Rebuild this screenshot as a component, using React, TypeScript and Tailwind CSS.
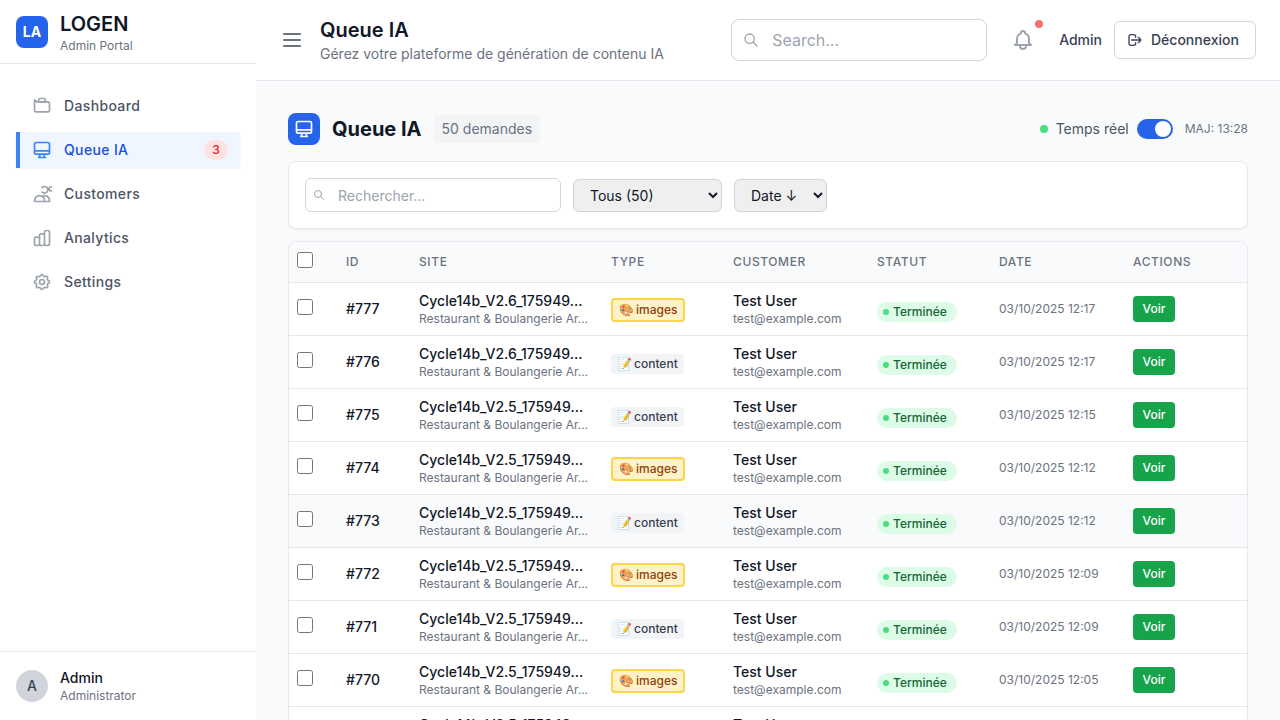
import React from "react";

type IconProps = { className?: string; paths: string[]; width?: number };

function Icon({ className, paths, width = 2 }: IconProps) {
  return (
    <svg className={className} fill="none" viewBox="0 0 24 24" stroke="currentColor" strokeWidth={width} strokeLinecap="round" strokeLinejoin="round" aria-hidden="true">
      {paths.map((d) => (
        <path key={d} d={d} />
      ))}
    </svg>
  );
}

const monitor = ["M9.75 17L9 20l-1 1h8l-1-1-.75-3M3 13h18M5 17h14a2 2 0 002-2V5a2 2 0 00-2-2H5a2 2 0 00-2 2v10a2 2 0 002 2z"];
const magnifier = ["M21 21l-6-6m2-5a7 7 0 11-14 0 7 7 0 0114 0z"];
const bell = ["M15 17h5l-1.405-1.405A2.032 2.032 0 0118 14.158V11a6.002 6.002 0 00-4-5.659V5a2 2 0 10-4 0v.341C7.67 6.165 6 8.388 6 11v3.159c0 .538-.214 1.055-.595 1.436L4 17h5m6 0v1a3 3 0 11-6 0v-1m6 0H9"];
const logout = ["M17 16l4-4m0 0l-4-4m4 4H7m6 4v1a3 3 0 01-3 3H6a3 3 0 01-3-3V7a3 3 0 013-3h4a3 3 0 013 3v1"];

const nav = [
  { label: "Dashboard", paths: ["M3 7v10a2 2 0 002 2h14a2 2 0 002-2V9a2 2 0 00-2-2H5a2 2 0 00-2-2z", "M8 5a2 2 0 012-2h4a2 2 0 012 2v2H8V5z"] },
  { label: "Queue IA", paths: monitor, active: true, badge: 3 },
  { label: "Customers", paths: ["M12 4.354a4 4 0 110 5.292M15 21H3v-1a6 6 0 0112 0v1zm0 0h6v-1a6 6 0 00-9-5.197m13.5-9a2.5 2.5 0 11-5 0 2.5 2.5 0 015 0z"] },
  { label: "Analytics", paths: ["M9 19v-6a2 2 0 00-2-2H5a2 2 0 00-2 2v6a2 2 0 002 2h2a2 2 0 002-2zm0 0V9a2 2 0 012-2h2a2 2 0 012 2v10m-6 0a2 2 0 002 2h2a2 2 0 002-2m0 0V5a2 2 0 012-2h2a2 2 0 012 2v14a2 2 0 01-2 2h-2a2 2 0 01-2-2z"] },
  { label: "Settings", paths: ["M10.325 4.317c.426-1.756 2.924-1.756 3.35 0a1.724 1.724 0 002.573 1.066c1.543-.94 3.31.826 2.37 2.37a1.724 1.724 0 001.065 2.572c1.756.426 1.756 2.924 0 3.35a1.724 1.724 0 00-1.066 2.573c.94 1.543-.826 3.31-2.37 2.37a1.724 1.724 0 00-2.572 1.065c-.426 1.756-2.924 1.756-3.35 0a1.724 1.724 0 00-2.573-1.066c-1.543.94-3.31-.826-2.37-2.37a1.724 1.724 0 00-1.065-2.572c-1.756-.426-1.756-2.924 0-3.35a1.724 1.724 0 001.066-2.573c-.94-1.543.826-3.31 2.37-2.37.996.608 2.296.07 2.572-1.065z", "M15 12a3 3 0 11-6 0 3 3 0 016 0z"] },
];

type Row = { id: number; site: string; type: "images" | "content"; date: string };

const rows: Row[] = [
  { id: 777, site: "Cycle14b_V2.6_175949...", type: "images", date: "03/10/2025 12:17" },
  { id: 776, site: "Cycle14b_V2.6_175949...", type: "content", date: "03/10/2025 12:17" },
  { id: 775, site: "Cycle14b_V2.5_175949...", type: "content", date: "03/10/2025 12:15" },
  { id: 774, site: "Cycle14b_V2.5_175949...", type: "images", date: "03/10/2025 12:12" },
  { id: 773, site: "Cycle14b_V2.5_175949...", type: "content", date: "03/10/2025 12:12" },
  { id: 772, site: "Cycle14b_V2.5_175949...", type: "images", date: "03/10/2025 12:09" },
  { id: 771, site: "Cycle14b_V2.5_175949...", type: "content", date: "03/10/2025 12:09" },
  { id: 770, site: "Cycle14b_V2.5_175949...", type: "images", date: "03/10/2025 12:05" },
  { id: 769, site: "Cycle14b_V2.5_175949...", type: "content", date: "03/10/2025 12:05" },
];

function Sidebar() {
  return (
    <aside className="flex w-64 shrink-0 flex-col bg-white">
      <div className="flex h-16 items-center gap-3 border-b border-[#e5e7eb] px-4">
        <div className="flex size-8 items-center justify-center rounded-lg bg-[#2563eb] text-sm font-bold text-white">LA</div>
        <div>
          <div className="text-xl leading-7 font-semibold text-[#111827]">LOGEN</div>
          <div className="text-xs text-[#6b7280]">Admin Portal</div>
        </div>
      </div>
      <nav className="flex flex-1 flex-col gap-2 px-4 py-6">
        {nav.map((item) => (
          <a
            key={item.label}
            href="#"
            aria-current={item.active ? "page" : undefined}
            className={
              item.active
                ? "flex h-9 items-center gap-3 border-l-4 border-[#3b82f6] bg-[#eff6ff] px-3 text-sm font-medium tracking-wide text-[#1d4ed8] shadow-xs"
                : "flex h-9 items-center gap-3 border-l-4 border-transparent px-3 text-sm font-medium tracking-wide text-[#4b5563]"
            }
          >
            <Icon className={item.active ? "size-5 text-[#3b82f6]" : "size-5 text-[#9ca3af]"} paths={item.paths} />
            <span className="flex-1">{item.label}</span>
            {item.badge && <span className="rounded-full bg-[#fee2e2] px-2 py-0.5 text-xs text-[#dc2626]">{item.badge}</span>}
          </a>
        ))}
      </nav>
      <div className="flex items-center gap-3 border-t border-[#e5e7eb] p-4">
        <div className="flex size-8 items-center justify-center rounded-full bg-[#d1d5db] text-sm font-medium text-[#374151]">A</div>
        <div>
          <div className="text-sm font-medium text-[#111827]">Admin</div>
          <div className="text-xs text-[#6b7280]">Administrator</div>
        </div>
      </div>
    </aside>
  );
}

function Header() {
  return (
    <header className="flex items-center justify-between border-b border-[#e5e7eb] bg-white px-6 py-4">
      <div className="flex items-center gap-4">
        <button type="button" aria-label="Menu" className="text-[#6b7280]">
          <Icon className="size-6" paths={["M4 6h16M4 12h16M4 18h16"]} />
        </button>
        <div>
          <h1 className="text-xl leading-7 font-semibold text-[#111827]">Queue IA</h1>
          <p className="text-sm text-[#6b7280]">Gérez votre plateforme de génération de contenu IA</p>
        </div>
      </div>
      <div className="flex items-center">
        <label className="relative mr-6 block">
          <Icon className="absolute top-[13px] left-3 size-4 text-[#9ca3af]" paths={magnifier} />
          <input type="text" aria-label="Search" placeholder="Search..." className="block h-[42px] w-64 rounded-lg border border-[#d1d5db] bg-white pr-4 pl-10 text-base outline-none placeholder:text-[#9ca3af]" />
        </label>
        <button type="button" aria-label="Notifications" className="relative mr-6 text-[#9ca3af]">
          <Icon className="size-6" paths={bell} />
          <span className="absolute -top-2 -right-2 size-2 rounded-full bg-[#f87171]" />
        </button>
        <span className="mr-3 text-sm font-medium text-[#374151]">Admin</span>
        <button type="button" className="flex h-[38px] w-[142px] items-center gap-2 rounded-md border border-[#d1d5db] bg-white px-3 text-sm font-medium text-[#374151]">
          <Icon className="size-4 shrink-0" paths={logout} />
          Déconnexion
        </button>
      </div>
    </header>
  );
}

function TypeBadge({ type }: { type: Row["type"] }) {
  return type === "images" ? (
    <span className="inline-flex items-center gap-0.5 rounded border-2 border-[#fcd34d] bg-[#fef3c7] px-1.5 py-0.5 text-xs font-medium text-[#92400e]">
      <span>🎨</span>
      <span>images</span>
    </span>
  ) : (
    <span className="inline-flex items-center gap-0.5 rounded bg-[#f3f4f6] px-1.5 py-0.5 text-xs font-medium text-[#374151]">
      <span>📝</span>
      <span>content</span>
    </span>
  );
}

function QueueTable() {
  const head = "px-2 text-left text-xs font-medium tracking-wider";
  return (
    <div className="shrink-0 overflow-hidden rounded-lg border border-[#e5e7eb] bg-white shadow-xs">
      <table className="w-full table-fixed">
        <colgroup>
          <col className="w-[49px]" />
          <col className="w-[73px]" />
          <col className="w-[192px]" />
          <col className="w-[122px]" />
          <col className="w-[144px]" />
          <col className="w-[122px]" />
          <col className="w-[134px]" />
          <col />
        </colgroup>
        <thead className="bg-[#f9fafb] text-[#6b7280]">
          <tr className="h-10">
            <th className={head}>
              <input type="checkbox" aria-label="Tout sélectionner" className="mb-1 block size-4" />
            </th>
            <th className={head}>ID</th>
            <th className={head}>SITE</th>
            <th className={head}>TYPE</th>
            <th className={head}>CUSTOMER</th>
            <th className={head}>STATUT</th>
            <th className={head}>DATE</th>
            <th className={head}>ACTIONS</th>
          </tr>
        </thead>
        <tbody>
          {rows.map((row) => (
            <tr key={row.id} className={row.id === 773 ? "h-[53px] border-t border-[#e5e7eb] bg-[#f9fafb]" : "h-[53px] border-t border-[#e5e7eb]"}>
              <td className="px-2">
                <input type="checkbox" aria-label={`Sélectionner la demande ${row.id}`} className="mb-1 block size-4" />
              </td>
              <td className="px-2 text-sm font-medium text-[#111827]">#{row.id}</td>
              <td className="px-2 pt-0.5">
                <div className="text-sm leading-[18px] font-medium text-[#111827]">{row.site}</div>
                <div className="text-xs leading-[18px] whitespace-nowrap text-[#6b7280]">Restaurant &amp; Boulangerie Ar...</div>
              </td>
              <td className="px-2">
                <TypeBadge type={row.type} />
              </td>
              <td className="px-2 pt-0.5">
                <div className="text-sm leading-[18px] font-medium text-[#111827]">Test User</div>
                <div className="text-xs leading-[18px] text-[#6b7280]">test@example.com</div>
              </td>
              <td className="px-2 pt-0.5">
                <span className="mt-1 inline-flex w-20 items-center gap-1 rounded-full bg-[#dcfce7] px-1.5 py-0.5 text-xs font-medium text-[#166534]">
                  <span className="size-1.5 rounded-full bg-[#4ade80]" />
                  Terminée
                </span>
              </td>
              <td className="px-2 text-xs text-[#6b7280]">{row.date}</td>
              <td className="px-2">
                <button type="button" className="block w-[42px] rounded bg-[#16a34a] py-1 text-center text-xs leading-[18px] font-medium text-white">Voir</button>
              </td>
            </tr>
          ))}
        </tbody>
      </table>
    </div>
  );
}

export default function App() {
  return (
    <div className="flex h-screen overflow-hidden bg-[#f9fafb] font-['Inter','Noto_Sans',sans-serif]">
      <Sidebar />
      <div className="flex min-w-0 flex-1 flex-col">
        <Header />
        <main className="flex min-h-0 flex-1 flex-col gap-3 overflow-y-auto px-8 py-8 [scrollbar-width:none]">
          <div className="mb-1 flex shrink-0 items-center justify-between">
            <div className="flex items-center gap-3">
              <div className="flex size-8 items-center justify-center rounded-lg bg-[#2563eb] text-white">
                <Icon className="size-5" paths={monitor} />
              </div>
              <h2 className="text-xl leading-7 font-bold text-[#111827]">Queue IA</h2>
              <span className="rounded bg-[#f3f4f6] px-2 py-1 text-sm text-[#6b7280]">50 demandes</span>
            </div>
            <div className="flex items-center gap-2">
              <span className="size-2 rounded-full bg-[#4ade80]" />
              <span id="realtime" className="text-sm text-[#4b5563]">Temps réel</span>
              <button type="button" role="switch" aria-checked="true" aria-labelledby="realtime" className="flex h-5 w-9 items-center justify-end rounded-full bg-[#2563eb] px-0.5">
                <span className="size-4 rounded-full bg-white" />
              </button>
              <span className="ml-1 text-xs text-[#6b7280]">MAJ: 13:28</span>
            </div>
          </div>
          <div className="flex shrink-0 items-center gap-3 rounded-lg border border-[#e5e7eb] bg-white p-4 shadow-xs">
            <label className="relative block">
              <Icon className="absolute top-[11px] left-2 size-3 text-[#9ca3af]" paths={magnifier} />
              <input type="text" aria-label="Rechercher" placeholder="Rechercher..." className="block h-[34px] w-64 rounded-md border border-[#d1d5db] bg-white pr-3 pl-8 text-sm outline-none placeholder:text-[#9ca3af]" />
            </label>
            <select aria-label="Statut" className="h-[33px] w-[149px] rounded-md border border-[#d1d5db] bg-[#efefef] px-3 text-sm text-[#111827]">
              <option>Tous (50)</option>
            </select>
            <select aria-label="Tri" className="h-[33px] w-[93px] rounded-md border border-[#d1d5db] bg-[#efefef] px-3 text-sm text-[#111827]">
              <option>Date ↓</option>
            </select>
          </div>
          <QueueTable />
        </main>
      </div>
    </div>
  );
}
